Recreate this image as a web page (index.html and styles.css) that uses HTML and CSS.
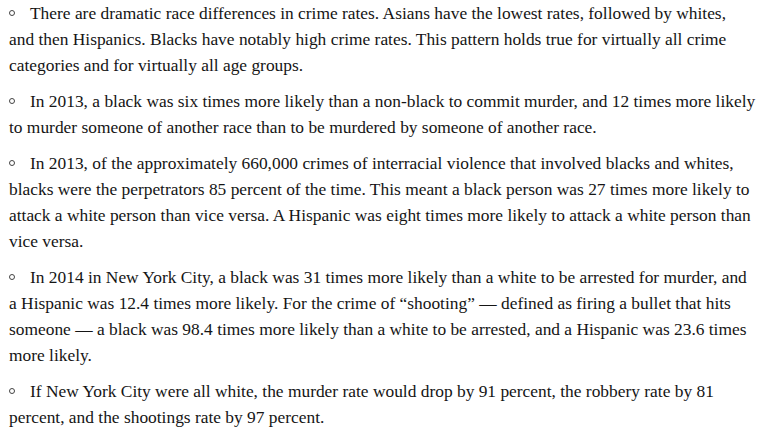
FILE: index.html
```html
<!DOCTYPE html>
<html>
<head>
<meta charset="utf-8">
<link rel="stylesheet" href="styles.css">
</head>
<body>
<div class="list">
  <p class="item"><span class="bullet"></span>There are dramatic race differences in crime rates. Asians have the lowest rates, followed by whites, and&nbsp;then Hispanics. Blacks have notably high crime rates. This pattern holds true for virtually all crime categories and for virtually all age groups.</p>
  <p class="item"><span class="bullet"></span>In 2013, a black was six times more likely than a non-black to commit murder, and 12 times more likely to murder someone of another race than to be murdered by someone of another race.</p>
  <p class="item"><span class="bullet"></span>In 2013, of the approximately 660,000 crimes of interracial violence that involved blacks and whites, blacks were the perpetrators 85 percent of the time. This meant a black person was 27 times more likely to attack a white person than vice versa. A Hispanic was eight times more likely to attack a white person than vice versa.</p>
  <p class="item"><span class="bullet"></span>In 2014 in New York City, a black was 31 times more likely than a white to be arrested for murder, and a&nbsp;Hispanic was 12.4 times more likely. For the crime of “shooting” — defined as firing a bullet that hits someone — a black was 98.4 times more likely than a white to be arrested, and a Hispanic was 23.6 times more likely.</p>
  <p class="item"><span class="bullet"></span>If New York City were all white, the murder rate would drop by 91 percent, the robbery rate by 81 percent, and the shootings rate by 97 percent.</p>
</div>
</body>
</html>
```
FILE: styles.css
```css
html, body {
  margin: 0;
  padding: 0;
  background: #ffffff;
}
.list {
  width: 755px;
  padding: 0 0 0 9px;
  font-family: "Liberation Serif", "Times New Roman", serif;
  font-size: 17.4px;
  line-height: 26px;
  color: #151515;
}
.item {
  margin: 0 0 10px 0;
}
.bullet {
  display: inline-block;
  width: 4px;
  height: 4px;
  border: 1.2px solid #444;
  border-radius: 50%;
  margin-right: 15px;
  vertical-align: 3px;
}
```
